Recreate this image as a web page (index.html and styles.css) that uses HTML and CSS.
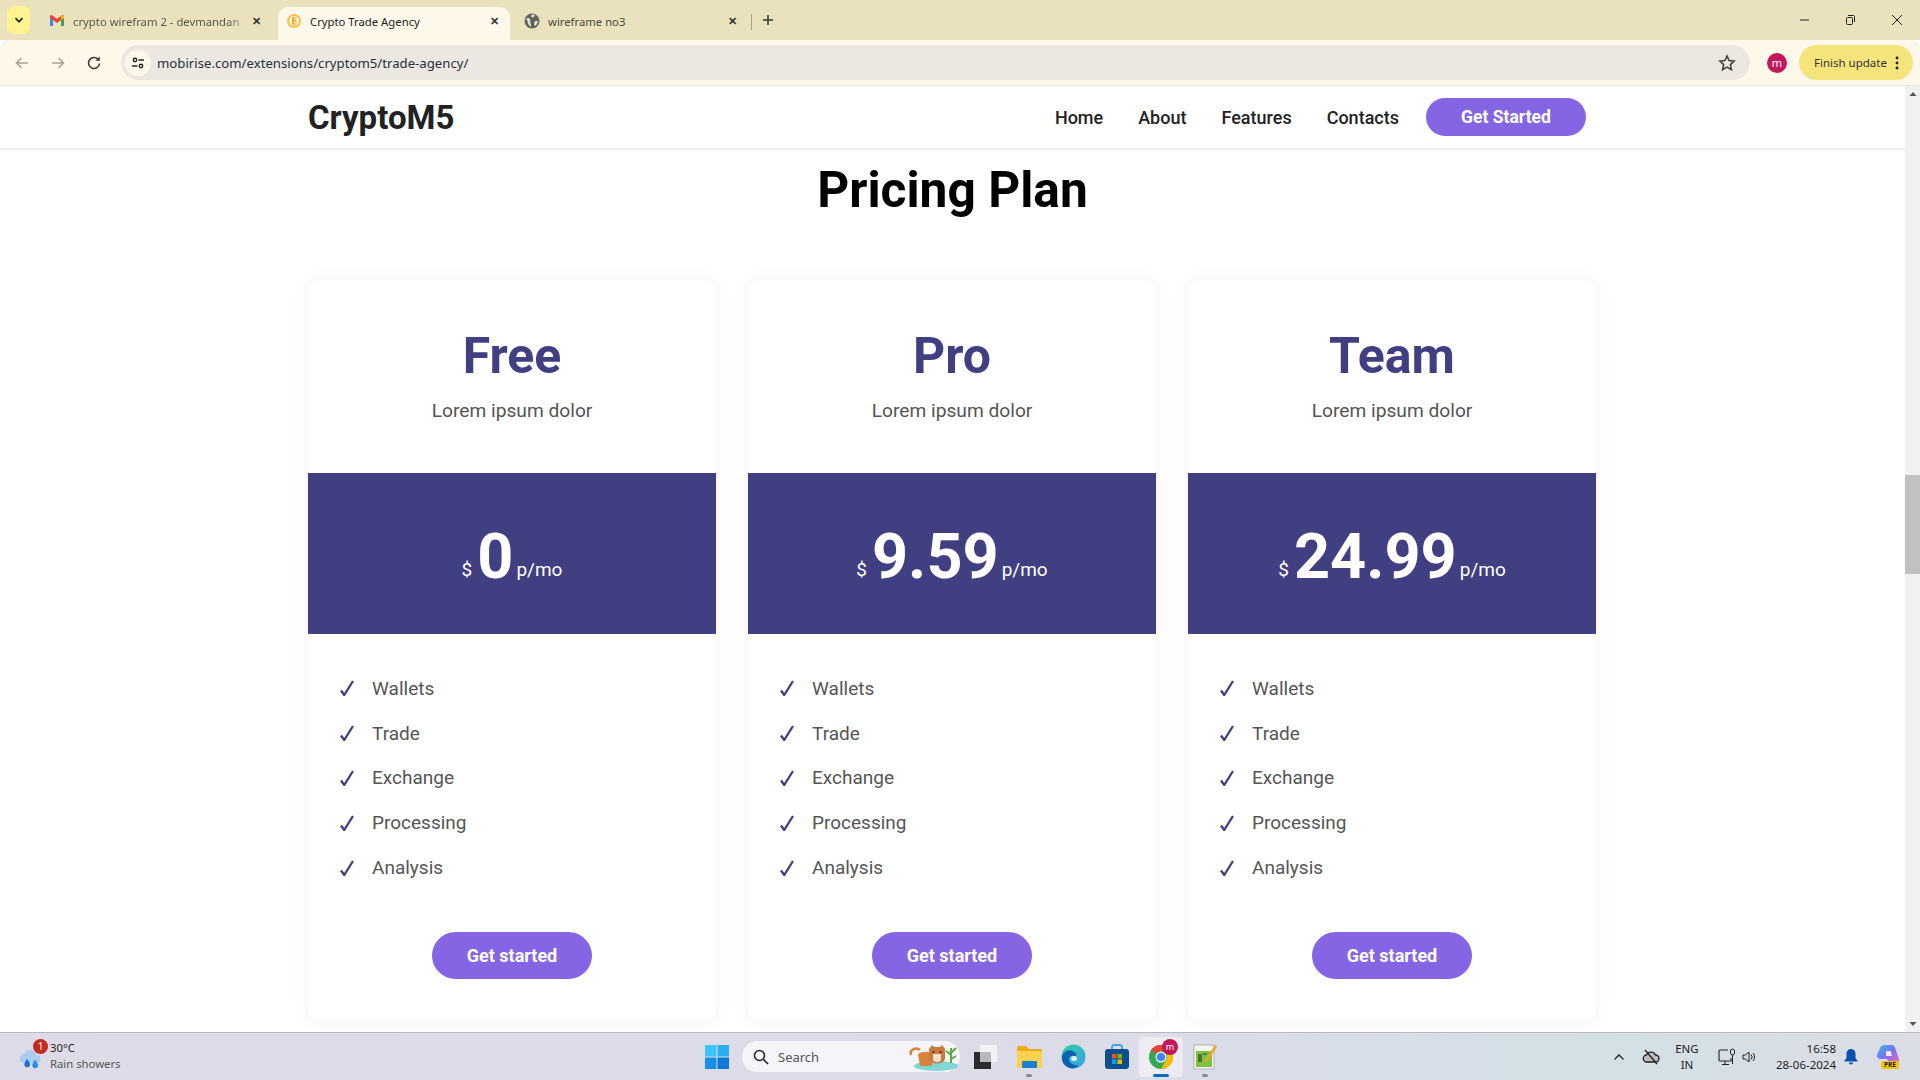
FILE: index.html
```html
<!DOCTYPE html>
<html lang="en">
<head>
  <meta charset="UTF-8">
  <meta name="viewport" content="width=device-width, initial-scale=1.0">
  <title>Crypto Trade Agency</title>
  <link rel="stylesheet" href="styles.css">
</head>
<body>
  <div class="screen">
    <!-- browser tabs -->
    <div class="tabstrip">
      <div class="tab-search">
        <svg width="12" height="12" viewBox="0 0 12 12"><path d="M2.5 4.2 6 7.8l3.5-3.6" fill="none" stroke="#222" stroke-width="1.8"/></svg>
      </div>
      <div class="tab tab-first">
        <svg class="tab-icon" width="16" height="16" viewBox="0 0 16 16">
          <path d="M1 4v9h3V6.5z" fill="#4285f4"/><path d="M12 6.5V13h3V4z" fill="#34a853"/>
          <path d="M1 3.2V5l7 5 7-5V3.2a1.3 1.3 0 0 0-2-1L8 6 3 2.2a1.3 1.3 0 0 0-2 1z" fill="#ea4335"/>
          <path d="M12 2.8 15 2.5V5l-3 2.2z" fill="#fbbc04"/>
        </svg>
        <span class="tab-title tab-title-fade">crypto wirefram 2 - devmandan</span>
        <span class="tab-close">&#x2715;</span>
      </div>
      <div class="tab tab-active">
        <svg class="tab-icon" width="16" height="16" viewBox="0 0 16 16"><circle cx="8" cy="8" r="7" fill="#f7c04a"/><circle cx="8" cy="8" r="5" fill="#fff4d6"/><path d="M6.5 4.8h2.2c1.7 0 1.7 3.1 0 3.1H6.5h2.6c1.7 0 1.7 3.3 0 3.3H6.5zM7.5 4v8" fill="none" stroke="#f0a92c" stroke-width="1"/></svg>
        <span class="tab-title">Crypto Trade Agency</span>
        <span class="tab-close">&#x2715;</span>
      </div>
      <div class="tab tab-last">
        <svg class="tab-icon" width="16" height="16" viewBox="0 0 16 16"><circle cx="8" cy="8" r="7.5" fill="#5f6368"/><path d="M2 5.5 5 5l1.5 2L6 9l1 2v3L4 11 3.5 8zM8 1.5l3 .5-1 2-2 .5-1-1.5zM11 8h3l-1 3-2 2-1-2z" fill="#e9e2bd"/></svg>
        <span class="tab-title">wireframe no3</span>
        <span class="tab-close">&#x2715;</span>
      </div>
      <span class="tab-sep"></span>
      <svg class="tab-new" width="12" height="12" viewBox="0 0 12 12"><path d="M6 1v10M1 6h10" stroke="#333" stroke-width="1.5"/></svg>
      <div class="win-controls">
        <svg width="12" height="12" viewBox="0 0 12 12"><path d="M1 6h9" stroke="#222"/></svg>
        <svg width="12" height="12" viewBox="0 0 12 12"><path d="M3 1.5h5.500a1 1 0 0 1 1 1V8M1.5 4.500a1 1 0 0 1 1-1h4a1 1 0 0 1 1 1v5a1 1 0 0 1-1 1h-4a1 1 0 0 1-1-1z" fill="none" stroke="#222"/></svg>
        <svg width="12" height="12" viewBox="0 0 12 12"><path d="M1 1l10 10M11 1 1 11" stroke="#222"/></svg>
      </div>
    </div>

    <!-- address bar -->
    <div class="toolbar">
      <svg class="tool-btn" width="16" height="16" viewBox="0 0 16 16"><path d="M14 8H2.5M7.5 3l-5 5 5 5" fill="none" stroke="#a3a096" stroke-width="1.6"/></svg>
      <svg class="tool-btn" width="16" height="16" viewBox="0 0 16 16"><path d="M2 8h11.5M8.5 3l5 5-5 5" fill="none" stroke="#a3a096" stroke-width="1.6"/></svg>
      <svg class="tool-btn" width="16" height="16" viewBox="0 0 16 16"><path d="M13.5 8.5A5.500 5.500 0 1 1 12 4.200" fill="none" stroke="#3c3a33" stroke-width="1.6"/><path d="M13.8 1.5v4.300H9.500z" fill="#3c3a33"/></svg>
      <div class="address">
        <span class="site-info">
          <svg width="14" height="14" viewBox="0 0 14 14"><circle cx="4" cy="4" r="1.7" fill="none" stroke="#222" stroke-width="1.4"/><path d="M7.5 4H13M1 10h5.5" stroke="#222" stroke-width="1.5"/><circle cx="10" cy="10" r="1.7" fill="none" stroke="#222" stroke-width="1.4"/></svg>
        </span>
        <span class="url">mobirise.com/extensions/cryptom5/trade-agency/</span>
        <svg class="star" width="18" height="18" viewBox="0 0 18 18"><path d="m9 2 2.100 4.600 5 .6-3.700 3.400 1 5L9 13.100 4.600 15.600l1-5L1.900 7.200l5-.6z" fill="none" stroke="#44423a" stroke-width="1.6"/></svg>
      </div>
      <span class="avatar">m</span>
      <div class="update">
        <span>Finish update</span>
        <svg width="4" height="14" viewBox="0 0 4 14"><circle cx="2" cy="2" r="1.4" fill="#222"/><circle cx="2" cy="7" r="1.4" fill="#222"/><circle cx="2" cy="12" r="1.4" fill="#222"/></svg>
      </div>
    </div>

    <div class="viewport">
      <div class="page">
        <header class="site-nav">
          <div class="container nav-inner">
            <a class="brand">CryptoM5</a>
            <nav class="nav-links">
              <a>Home</a>
              <a>About</a>
              <a>Features</a>
              <a>Contacts</a>
            </nav>
            <a class="btn btn-nav">Get Started</a>
          </div>
        </header>

        <section class="pricing">
          <h2 class="pricing-title">Pricing Plan</h2>
          <div class="container plans">
            <div class="plan">
              <div class="plan-head">
                <h3>Free</h3>
                <p>Lorem ipsum dolor</p>
              </div>
              <div class="plan-price"><span class="cur">$</span><span class="amount">0</span><span class="per">p/mo</span></div>
              <ul class="plan-list">
                <li><svg class="check" viewBox="0 0 14 16"><path d="M1 10.5 4.200 15 13 1" fill="none" stroke="#3f3f82" stroke-width="2.3"/></svg>Wallets</li>
                <li><svg class="check" viewBox="0 0 14 16"><path d="M1 10.5 4.200 15 13 1" fill="none" stroke="#3f3f82" stroke-width="2.3"/></svg>Trade</li>
                <li><svg class="check" viewBox="0 0 14 16"><path d="M1 10.5 4.200 15 13 1" fill="none" stroke="#3f3f82" stroke-width="2.3"/></svg>Exchange</li>
                <li><svg class="check" viewBox="0 0 14 16"><path d="M1 10.5 4.200 15 13 1" fill="none" stroke="#3f3f82" stroke-width="2.3"/></svg>Processing</li>
                <li><svg class="check" viewBox="0 0 14 16"><path d="M1 10.5 4.200 15 13 1" fill="none" stroke="#3f3f82" stroke-width="2.3"/></svg>Analysis</li>
              </ul>
              <a class="btn btn-plan">Get started</a>
            </div>
            <div class="plan">
              <div class="plan-head">
                <h3>Pro</h3>
                <p>Lorem ipsum dolor</p>
              </div>
              <div class="plan-price"><span class="cur">$</span><span class="amount">9.59</span><span class="per">p/mo</span></div>
              <ul class="plan-list">
                <li><svg class="check" viewBox="0 0 14 16"><path d="M1 10.5 4.200 15 13 1" fill="none" stroke="#3f3f82" stroke-width="2.3"/></svg>Wallets</li>
                <li><svg class="check" viewBox="0 0 14 16"><path d="M1 10.5 4.200 15 13 1" fill="none" stroke="#3f3f82" stroke-width="2.3"/></svg>Trade</li>
                <li><svg class="check" viewBox="0 0 14 16"><path d="M1 10.5 4.200 15 13 1" fill="none" stroke="#3f3f82" stroke-width="2.3"/></svg>Exchange</li>
                <li><svg class="check" viewBox="0 0 14 16"><path d="M1 10.5 4.200 15 13 1" fill="none" stroke="#3f3f82" stroke-width="2.3"/></svg>Processing</li>
                <li><svg class="check" viewBox="0 0 14 16"><path d="M1 10.5 4.200 15 13 1" fill="none" stroke="#3f3f82" stroke-width="2.3"/></svg>Analysis</li>
              </ul>
              <a class="btn btn-plan">Get started</a>
            </div>
            <div class="plan">
              <div class="plan-head">
                <h3>Team</h3>
                <p>Lorem ipsum dolor</p>
              </div>
              <div class="plan-price"><span class="cur">$</span><span class="amount">24.99</span><span class="per">p/mo</span></div>
              <ul class="plan-list">
                <li><svg class="check" viewBox="0 0 14 16"><path d="M1 10.5 4.200 15 13 1" fill="none" stroke="#3f3f82" stroke-width="2.3"/></svg>Wallets</li>
                <li><svg class="check" viewBox="0 0 14 16"><path d="M1 10.5 4.200 15 13 1" fill="none" stroke="#3f3f82" stroke-width="2.3"/></svg>Trade</li>
                <li><svg class="check" viewBox="0 0 14 16"><path d="M1 10.5 4.200 15 13 1" fill="none" stroke="#3f3f82" stroke-width="2.3"/></svg>Exchange</li>
                <li><svg class="check" viewBox="0 0 14 16"><path d="M1 10.5 4.200 15 13 1" fill="none" stroke="#3f3f82" stroke-width="2.3"/></svg>Processing</li>
                <li><svg class="check" viewBox="0 0 14 16"><path d="M1 10.5 4.200 15 13 1" fill="none" stroke="#3f3f82" stroke-width="2.3"/></svg>Analysis</li>
              </ul>
              <a class="btn btn-plan">Get started</a>
            </div>
          </div>
        </section>
      </div>

      <div class="scrollbar">
        <svg width="8" height="6" viewBox="0 0 8 6"><path d="M4 1 7.5 5H.5z" fill="#555"/></svg>
        <div class="scroll-track"><div class="scroll-thumb"></div></div>
        <svg width="8" height="6" viewBox="0 0 8 6"><path d="M4 5 7.5 1H.5z" fill="#555"/></svg>
      </div>
    </div>

    <!-- windows taskbar -->
    <footer class="taskbar">
      <div class="weather">
        <span class="weather-icon">
          <svg width="24" height="22" viewBox="0 0 24 22">
            <path d="M5 15a4.500 4.500 0 0 1 .5-9 6 6 0 0 1 11.500 1 4 4 0 0 1 1 8z" fill="#a9cdef"/>
            <path d="M8 11c2 2.500 3 4 3 5.500a2.800 2.800 0 0 1-5.600 0C5.400 15 6.500 13 8 11z" fill="#1f6fd6"/>
            <path d="M16 12c2 2.500 3 4 3 5.500a2.800 2.800 0 0 1-5.600 0c0-1.500 1-3.500 2.600-5.500z" fill="#2a8bf0"/>
          </svg>
          <span class="weather-badge">1</span>
        </span>
        <div class="weather-text">
          <span>30°C</span>
          <span class="muted">Rain showers</span>
        </div>
      </div>

      <div class="task-center">
        <svg class="task-win" width="24" height="24" viewBox="0 0 24 24">
          <rect x="0" y="0" width="11.5" height="11.5" fill="#3cc4f5"/><rect x="12.5" y="0" width="11.5" height="11.5" fill="#2aaef0"/>
          <rect x="0" y="12.5" width="11.5" height="11.5" fill="#1a8fe6"/><rect x="12.5" y="12.5" width="11.5" height="11.5" fill="#0f78d8"/>
        </svg>
        <div class="task-search">
          <svg width="16" height="16" viewBox="0 0 16 16"><circle cx="6.5" cy="6.5" r="5" fill="none" stroke="#222" stroke-width="1.5"/><path d="m10.5 10.5 4.500 4.500" stroke="#222" stroke-width="1.7"/></svg>
          <span>Search</span>
          <svg class="tiger" width="50" height="32" viewBox="0 0 50 32">
            <ellipse cx="27" cy="26" rx="22" ry="5" fill="#7fd8d6"/>
            <path d="M2 15c-2-6 6-8 9-5" fill="none" stroke="#d9823c" stroke-width="2.5"/>
            <path d="M9 14c5-3 10-3 14 0v12H11z" fill="#d9823c"/>
            <path d="M20 9l3-4 2 2h6l2-2 3 4v10c-2 6-14 6-16 0z" fill="#c97a3d"/>
            <path d="M24 14h8v6c-2 3-6 3-8 0z" fill="#f3e2c9"/>
            <circle cx="24.5" cy="12" r="1" fill="#222"/><circle cx="31.5" cy="12" r="1" fill="#222"/>
            <path d="M42 23V8M42 15l-5-4M42 13l5-5M42 19l5-3" fill="none" stroke="#5ea844" stroke-width="2"/>
          </svg>
        </div>
        <span class="task-app">
          <svg width="25" height="25" viewBox="0 0 25 25"><rect x="7" y="1" width="17" height="17" fill="#f2f2f4"/><rect x="1" y="8" width="17" height="17" fill="#2c2c2c"/><rect x="7" y="8" width="11" height="10" fill="#b9b9bf"/></svg>
        </span>
        <span class="task-app task-open">
          <svg width="25" height="24" viewBox="0 0 25 24"><path d="M0 2a1 1 0 0 1 1-1h8l3 3h12a1 1 0 0 1 1 1v4H0z" fill="#e9ad1c"/><path d="M0 6h25v17H0z" fill="#fbd24e"/><rect x="5" y="16" width="15" height="7" rx="1" fill="#1a7fd0"/></svg>
        </span>
        <span class="task-app">
          <svg width="25" height="25" viewBox="0 0 25 25">
            <defs><linearGradient id="edgeA" x1="0" y1="0" x2="1" y2="1"><stop offset="0" stop-color="#2fd0a0"/><stop offset="1" stop-color="#38a0e8"/></linearGradient></defs>
            <circle cx="12.5" cy="12.5" r="12" fill="url(#edgeA)"/>
            <path d="M1 13C2 7 8 5 12 7c3 1.500 4 4 3 6-2-2-7-2-7 2 0 4 5 7 10 6-2 2-5 3.500-7 3.500C5 24 .5 19 1 13z" fill="#0c5fb3"/>
            <ellipse cx="13" cy="14.5" rx="3" ry="2.5" fill="#e4f1fb"/>
          </svg>
        </span>
        <span class="task-app">
          <svg width="24" height="25" viewBox="0 0 24 25"><path d="M7 6V3a2 2 0 0 1 2-2h6a2 2 0 0 1 2 2v3" fill="none" stroke="#35a6e8" stroke-width="1.8"/><rect x="0" y="5" width="24" height="20" rx="3" fill="#0e4f8e"/><rect x="7" y="10" width="4.5" height="4.5" fill="#f25022"/><rect x="12.5" y="10" width="4.5" height="4.5" fill="#7fba00"/><rect x="7" y="15.5" width="4.5" height="4.5" fill="#00a4ef"/><rect x="12.5" y="15.5" width="4.5" height="4.5" fill="#ffb900"/></svg>
        </span>
        <span class="task-app task-chrome">
          <svg width="24" height="24" viewBox="0 0 24 24">
            <circle cx="12" cy="12" r="12" fill="#34a853"/>
            <path d="M12 0a12 12 0 0 1 10.400 6H12a6 6 0 0 0-5.200 3L2.200 4.600A12 12 0 0 1 12 0z" fill="#ea4335"/>
            <path d="M22.400 6A12 12 0 0 1 12 24l5.200-9A6 6 0 0 0 17.200 9z" fill="#fbbc04"/>
            <circle cx="12" cy="12" r="5.5" fill="#fff"/><circle cx="12" cy="12" r="4.3" fill="#4285f4"/>
          </svg>
          <span class="chrome-badge">m</span>
          <span class="chrome-bar"></span>
        </span>
        <span class="task-app task-open">
          <svg width="24" height="28" viewBox="0 0 24 28"><rect x="1" y="2" width="20" height="24" fill="#f6f6ee" stroke="#9aa098" stroke-width=".7"/><rect x="3" y="8" width="16" height="16" fill="#7cc243"/><path d="M6 11v8M8 11v8M10.500 11h3" stroke="#222" stroke-width="1"/><path d="m22 2 2 1.500L15 18l-3 2 .5-3.500z" fill="#e9a52a"/></svg>
        </span>
      </div>

      <div class="tray">
        <svg class="tray-caret" width="12" height="8" viewBox="0 0 12 8"><path d="M1.500 6.500 6 2l4.500 4.500" fill="none" stroke="#222" stroke-width="1.3"/></svg>
        <svg class="tray-cloud" width="18" height="16" viewBox="0 0 18 16"><path d="M5 13a3.500 3.500 0 0 1-.5-7A5 5 0 0 1 13.500 6 3.500 3.500 0 0 1 13.500 13z" fill="#bbb" stroke="#222" stroke-width="1.3"/><path d="M3 1l12 14" stroke="#222" stroke-width="1.3"/></svg>
        <div class="tray-lang"><span>ENG</span><span>IN</span></div>
        <svg class="tray-net" width="18" height="18" viewBox="0 0 18 18"><path d="M10 2H2a1 1 0 0 0-1 1v9a1 1 0 0 0 1 1h11v-3M7 13v3M4 16.500h7" fill="none" stroke="#222" stroke-width="1.1"/><rect x="12.5" y="1" width="4" height="6" rx="2" fill="none" stroke="#222"/><path d="M14.500 7v9" stroke="#222"/></svg>
        <svg class="tray-vol" width="16" height="14" viewBox="0 0 16 14"><path d="M1 5v4h2.500L7 12V2L3.500 5z" fill="none" stroke="#222"/><path d="M9 4.500a3.500 3.500 0 0 1 0 5M11 3a6 6 0 0 1 0 8" fill="none" stroke="#222"/></svg>
        <div class="tray-clock"><span>16:58</span><span>28-06-2024</span></div>
        <svg class="tray-bell" width="14" height="16" viewBox="0 0 14 16"><path d="M7 0a4.500 4.500 0 0 1 4.500 4.500V9l2.500 3.500H0L2.500 9V4.500A4.500 4.500 0 0 1 7 0zM5 13.500h4a2 2 0 0 1-4 0z" fill="#0a4fb0"/></svg>
        <span class="copilot">
          <svg width="23" height="20" viewBox="0 0 23 20">
            <defs><linearGradient id="copA" x1="0" y1="0" x2="1" y2="1"><stop offset="0" stop-color="#28c7e0"/><stop offset=".5" stop-color="#7f6cf2"/><stop offset="1" stop-color="#f06bc0"/></linearGradient></defs>
            <path d="M8 0h8c2 0 3 2 3.500 4L23 14c.5 2-1 4-3 4h-7l-2-4H5C2 14 .5 12 1 10L4 3c.6-2 2-3 4-3z" fill="url(#copA)"/>
            <path d="M10 6h5l1 5h-6z" fill="#e6e8f5"/>
          </svg>
          <span class="copilot-pre">PRE</span>
        </span>
      </div>
    </footer>
  </div>
</body>
</html>
```

FILE: styles.css
```css
* {
  box-sizing: border-box;
}
html, body {
  height: 100%;
}
body {
  margin: 0;
  font-family: "Noto Sans", sans-serif;
  color: #222;
  overflow: hidden;
}
.screen {
  display: flex;
  flex-direction: column;
  height: 1080px;
  width: 1920px;
}

/* tabs */
.tabstrip {
  display: flex;
  align-items: flex-end;
  height: 40px;
  background: #e9e2bd;
  padding-left: 7px;
  flex: none;
}
.tab-search {
  display: flex;
  align-items: center;
  justify-content: center;
  width: 23px;
  height: 28px;
  margin: 0 6px 6px 0;
  background: #fdf48f;
  border-radius: 8px;
}
.tab {
  display: flex;
  align-items: center;
  height: 33px;
  font-size: 11.3px;
  color: #4a4838;
  padding-bottom: 5px;
}
.tab-first {
  width: 242px;
  padding-left: 13px;
}
.tab-active {
  width: 232px;
  padding-left: 8px;
  background: #fef8eb;
  border-radius: 10px 10px 0 0;
  color: #222;
}
.tab-last {
  width: 232px;
  padding-left: 14px;
}
.tab-icon {
  flex: none;
  margin: 0 8px 1px 0;
}
.tab-title {
  flex: 1;
  white-space: nowrap;
  overflow: hidden;
}
.tab-title-fade {
  color: #5a5846;
  -webkit-mask-image: linear-gradient(90deg, #000 88%, transparent 100%);
  mask-image: linear-gradient(90deg, #000 88%, transparent 100%);
}
.tab-close {
  flex: none;
  width: 12px;
  margin: 0 10px 1px 0;
  font-size: 11px;
  font-weight: 700;
  color: #333;
  text-align: center;
}
.tab-first .tab-close {
  margin-right: 16px;
}
.tab-last .tab-close {
  margin-right: 4px;
}
.tab-sep {
  width: 1px;
  height: 16px;
  margin: 0 0 10px 9px;
  background: #a8a283;
}
.tab-new {
  margin: 0 0 14px 10px;
}
.win-controls {
  display: flex;
  gap: 34px;
  margin-left: auto;
  margin-bottom: 14px;
  padding-right: 17px;
}

/* toolbar */
.toolbar {
  display: flex;
  align-items: center;
  height: 46px;
  background: #fef8eb;
  border-bottom: 1px solid #ece6d2;
  border-radius: 8px 8px 0 0;
  padding: 0 6px 0 14px;
  flex: none;
}
.tool-btn {
  margin-right: 20px;
}
.address {
  display: flex;
  align-items: center;
  width: 1629px;
  height: 35px;
  margin-left: -1px;
  padding: 0 14px 0 4px;
  background: #ece8e1;
  border-radius: 18px;
}
.site-info {
  display: flex;
  align-items: center;
  justify-content: center;
  width: 26px;
  height: 26px;
  margin-right: 6px;
  background: #fef8eb;
  border-radius: 50%;
}
.url {
  flex: 1;
  font-size: 13.2px;
  color: #26303a;
}
.avatar {
  display: flex;
  align-items: center;
  justify-content: center;
  width: 20px;
  height: 20px;
  margin-left: 17px;
  background: #c2185b;
  border-radius: 50%;
  color: #fff;
  font-size: 11px;
}
.update {
  display: flex;
  align-items: center;
  gap: 8px;
  width: 114px;
  height: 35px;
  margin-left: 12px;
  padding-left: 15px;
  background: #f3e47c;
  border-radius: 18px;
  font-size: 11.5px;
  color: #333;
}

/* page */
.viewport {
  display: flex;
  flex: 1;
  min-height: 0;
}
.page {
  flex: 1;
  background: #fff;
  overflow: hidden;
}
.container {
  width: 1289px;
  margin: 0 auto;
}
.site-nav {
  height: 64px;
  border-bottom: 2px solid #f0f0f0;
}
.nav-inner {
  display: flex;
  align-items: center;
  height: 100%;
  padding-right: 11px;
}
.brand {
  font-family: Roboto, sans-serif;
  font-size: 33px;
  font-weight: 700;
  color: #222;
}
.nav-links {
  display: flex;
  gap: 35px;
  margin-left: auto;
  font-family: Roboto, sans-serif;
  font-size: 18px;
  font-weight: 500;
  color: #222;
}
.btn {
  display: flex;
  align-items: center;
  justify-content: center;
  background: #8565e3;
  color: #fff;
  font-family: Roboto, sans-serif;
  font-weight: 700;
  border-radius: 24px;
}
.btn-nav {
  width: 160px;
  height: 38px;
  margin-left: 27px;
  font-size: 17.5px;
}
.pricing-title {
  margin: 0;
  padding-top: 8px;
  height: 130px;
  font-family: Roboto, sans-serif;
  font-size: 49.7px;
  font-weight: 700;
  line-height: 64px;
  color: #000;
  text-align: center;
}
.plans {
  display: grid;
  grid-template-columns: repeat(3, 408px);
  gap: 32px;
}
.plan {
  display: flex;
  flex-direction: column;
  height: 741px;
  background: #fff;
  border-radius: 12px;
  box-shadow: 0 0 20px rgba(0, 0, 0, 0.05);
  overflow: hidden;
}
.plan-head {
  height: 193px;
  padding-top: 46px;
  text-align: center;
}
.plan-head h3 {
  margin: 0;
  font-family: Roboto, sans-serif;
  font-size: 50px;
  font-weight: 700;
  line-height: 60px;
  color: #3f3f82;
}
.plan-head p {
  margin: 12px 0 0;
  font-family: Roboto, sans-serif;
  font-size: 19.2px;
  line-height: 26px;
  color: #555;
}
.plan-price {
  height: 161px;
  padding-top: 46px;
  background: #3f3f82;
  color: #fff;
  font-family: Roboto, sans-serif;
  text-align: center;
}
.cur {
  font-size: 19px;
  margin-right: 5px;
  vertical-align: 2px;
}
.amount {
  font-size: 63px;
  font-weight: 700;
  line-height: 75px;
  margin-right: 3px;
}
.per {
  font-size: 19px;
  vertical-align: 2px;
}
.plan-list {
  list-style: none;
  margin: 0;
  padding: 32px 0 0 32px;
  height: 298px;
  font-family: Roboto, sans-serif;
  font-size: 19px;
  color: #555;
}
.plan-list li {
  display: flex;
  align-items: center;
  height: 44.8px;
}
.check {
  width: 14px;
  height: 16px;
  margin-right: 18px;
  flex: none;
}
.btn-plan {
  width: 160px;
  height: 47px;
  margin: 0 auto;
  font-size: 18px;
}

/* fake scrollbar */
.scrollbar {
  display: flex;
  flex-direction: column;
  align-items: center;
  width: 15px;
  padding: 5px 0;
  background: #f1f1f1;
  flex: none;
}
.scroll-track {
  flex: 1;
  width: 100%;
}
.scroll-thumb {
  width: 15px;
  height: 99px;
  margin-top: 378px;
  background: #c1c1c1;
}

/* taskbar */
.taskbar {
  display: grid;
  grid-template-columns: 1fr auto 1fr;
  align-items: center;
  height: 48px;
  border-top: 1px solid #b8b7c2;
  background: linear-gradient(90deg, #dedbe9 0%, #dcdce9 55%, #d3e0e6 85%, #dcdde6 100%);
  flex: none;
}
.weather {
  display: flex;
  align-items: center;
  padding-left: 19px;
}
.weather-icon {
  position: relative;
  display: block;
  width: 24px;
  height: 22px;
  margin-right: 7px;
  margin-top: 4px;
}
.weather-badge {
  position: absolute;
  top: -9px;
  right: -5px;
  width: 15px;
  height: 15px;
  background: #c42b1c;
  border-radius: 50%;
  color: #fff;
  font-size: 10px;
  line-height: 15px;
  text-align: center;
}
.weather-text {
  display: flex;
  flex-direction: column;
  margin-top: -2px;
  font-size: 11.3px;
  line-height: 16px;
}
.muted {
  color: #555;
}
.task-center {
  display: flex;
  align-items: center;
  padding-left: 12px;
}
.task-win {
  margin-right: 13px;
}
.task-search {
  display: flex;
  align-items: center;
  position: relative;
  width: 218px;
  height: 31px;
  padding-left: 11px;
  background: #f4f4f9;
  border-radius: 16px;
  font-size: 13px;
  color: #555;
}
.task-search span {
  margin-left: 9px;
}
.tiger {
  position: absolute;
  right: 1px;
  top: -1px;
}
.task-app {
  position: relative;
  display: flex;
  align-items: center;
  justify-content: center;
  width: 44px;
  height: 40px;
}
.task-search + .task-app {
  margin-left: 3px;
}
.task-open::after {
  content: "";
  position: absolute;
  left: 19px;
  bottom: 0;
  width: 6px;
  height: 3px;
  background: #8a8a90;
  border-radius: 2px;
}
.task-chrome {
  background: #edecf4;
  border-radius: 4px;
}
.chrome-badge {
  position: absolute;
  top: 2px;
  right: 5px;
  width: 16px;
  height: 16px;
  background: #c2185b;
  border-radius: 50%;
  color: #fff;
  font-size: 9px;
  line-height: 15px;
  text-align: center;
}
.chrome-bar {
  position: absolute;
  left: 14px;
  bottom: 0;
  width: 16px;
  height: 3px;
  background: #0f6cbd;
  border-radius: 2px;
}
.tray {
  display: flex;
  align-items: center;
  justify-content: flex-end;
  padding-right: 21px;
  font-size: 11.5px;
  color: #222;
}
.tray-lang {
  display: flex;
  flex-direction: column;
  align-items: center;
  width: 26px;
  margin: 0 18px 0 14px;
  line-height: 16px;
}
.tray-caret {
  margin-right: 17px;
}
.tray-vol {
  margin: 0 0 0 6px;
}
.tray-clock {
  display: flex;
  flex-direction: column;
  align-items: flex-end;
  margin-left: 18px;
  line-height: 16px;
}
.tray-bell {
  margin: 0 18px 0 8px;
}
.copilot {
  position: relative;
  display: block;
  width: 23px;
  height: 24px;
}
.copilot-pre {
  position: absolute;
  left: 5px;
  bottom: 0;
  width: 18px;
  height: 8px;
  background: #f5c400;
  border-radius: 2px;
  color: #222;
  font-size: 6.5px;
  font-weight: 700;
  line-height: 8px;
  text-align: center;
}
```
